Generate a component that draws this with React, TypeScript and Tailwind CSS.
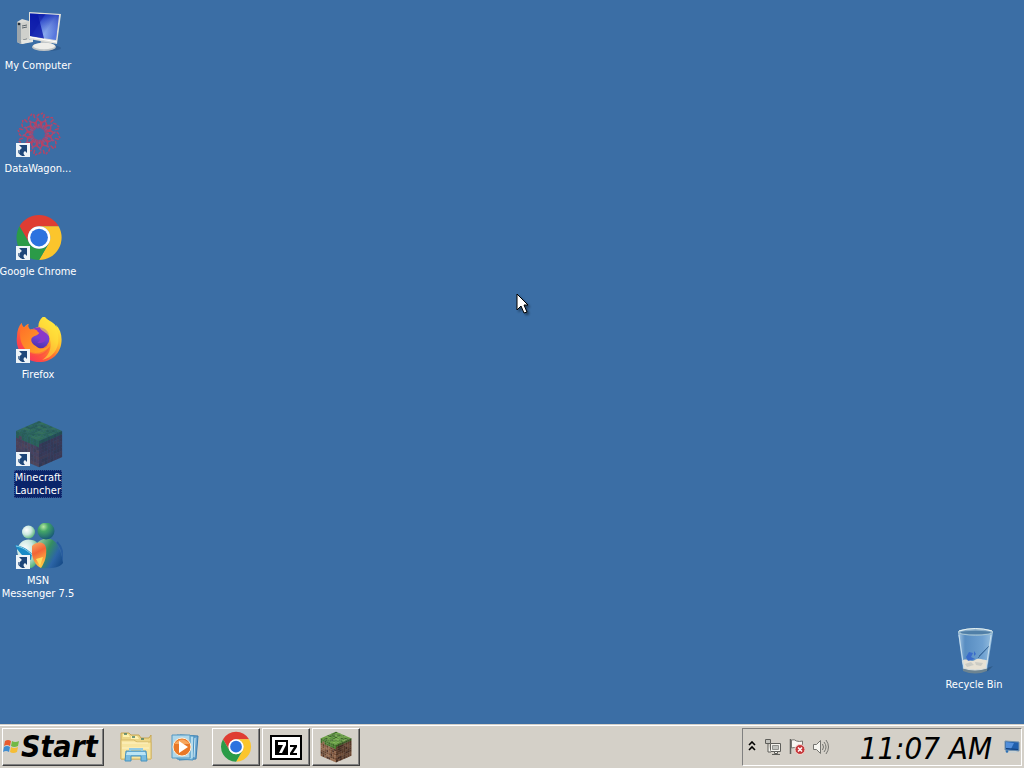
import React from "react";

type IconProps = { className?: string };

function noise(seed: number) {
  const v = Math.sin(seed * 127.1 + 11.7) * 43758.5453;
  return v - Math.floor(v);
}

function ComputerIcon() {
  return (
    <svg viewBox="0 0 48 48" className="size-12" aria-hidden="true">
      <defs>
        <linearGradient id="pc-screen" x1="0" y1="0" x2="1" y2="0.6">
          <stop offset="0" stopColor="#1c35c4" />
          <stop offset="0.38" stopColor="#0511a4" />
          <stop offset="0.42" stopColor="#3058dc" />
          <stop offset="0.7" stopColor="#7da6ee" />
          <stop offset="1" stopColor="#2347cf" />
        </linearGradient>
        <linearGradient id="pc-fade" x1="0" y1="0" x2="0" y2="1">
          <stop offset="0" stopColor="#0a1cac" stopOpacity="0.7" />
          <stop offset="1" stopColor="#c0daff" stopOpacity="0.35" />
        </linearGradient>
      </defs>
      <g transform="translate(1 1)">
        <ellipse cx="33" cy="39" rx="12" ry="3" fill="#264d7d" opacity="0.5" />
        <path d="M1 13 6 10l7 2v21l-8 2-4-2z" fill="#dcdcd8" />
        <path d="M1 13l4 1v21l-4-2z" fill="#9da6ac" />
        <path d="m5 14 8-2v21l-8 2z" fill="#cfd0cc" />
        <path d="m6 17 5-1M6 19l5-1M7 31l4-1" stroke="#5c666d" strokeWidth="1" />
        <circle cx="3" cy="15" r="1.3" fill="#26323d" />
        <path d="m5 31 12-1v3L6 35z" fill="#e7e7e2" />
        <path d="M25 31h10l1 7H24z" fill="#b9bfc2" />
        <ellipse cx="28" cy="38" rx="12" ry="4" fill="#bfc4c5" />
        <ellipse cx="28" cy="37" rx="11" ry="3.2" fill="#eeeeea" />
        <path d="m13 3 32 2-4 30-28-5z" fill="#e0e1dc" />
        <path d="m14 4.500 29 1.500-3 25-26-4z" fill="url(#pc-screen)" />
        <path d="m14 4.500 29 1.500-3 25-26-4z" fill="url(#pc-fade)" />
        <path d="m14 5 8 .5 6 24-14-2.500z" fill="#0815a8" opacity="0.8" />
        <path d="m14 28 27 5" stroke="#fff" />
      </g>
    </svg>
  );
}

function DataWagonIcon() {
  return (
    <svg viewBox="0 0 48 48" className="size-12" aria-hidden="true">
      <g stroke="#c83d5c" strokeLinecap="round" fill="none" opacity="0.88">
        {Array.from({ length: 12 }, (_, i) => (
          <g key={i} transform={`rotate(${i * 30 + 15} 24 23)`}>
            <path d="M24 16v-5l3-3M24 12l-3-2M24 6V3" strokeWidth="1.500" />
            <path d="M27 15l2-3M21 3l1-1M27 5l2-1" strokeWidth="1.500" />
            <path d="m18 8 2 2M22 16l-1-2" stroke="#a94c7a" strokeWidth="1.400" />
          </g>
        ))}
        <circle cx="24" cy="23" r="6.500" stroke="#a74474" strokeWidth="1.400" strokeDasharray="2 2" />
      </g>
    </svg>
  );
}

function ChromeIcon({ className = "size-12" }: IconProps) {
  return (
    <svg viewBox="0 0 48 48" className={className} aria-hidden="true">
      <g transform="translate(1.500 1) scale(.94)">
        <path d="M3.22 12A24 24 0 0 1 44.78 12H24A12 12 0 0 0 13.61 30Z" fill="#df3d32" />
        <path d="M44.78 12A24 24 0 0 1 24 48L34.39 30A12 12 0 0 0 24 12Z" fill="#fbc52c" />
        <path d="M24 48A24 24 0 0 1 3.22 12L13.61 30A12 12 0 0 0 34.39 30Z" fill="#2b9b48" />
        <circle cx="24" cy="24" r="12" fill="#fff" />
        <circle cx="24" cy="24" r="9.400" fill="#2b72df" />
      </g>
    </svg>
  );
}

function FirefoxIcon() {
  return (
    <svg viewBox="0 0 48 48" className="size-12" aria-hidden="true">
      <defs>
        <linearGradient id="fx-body" x1="0.85" y1="0.1" x2="0.15" y2="0.9">
          <stop offset="0" stopColor="#fff143" />
          <stop offset="0.3" stopColor="#ffc22f" />
          <stop offset="0.55" stopColor="#ff762f" />
          <stop offset="0.8" stopColor="#ff4a45" />
          <stop offset="1" stopColor="#f6355f" />
        </linearGradient>
        <linearGradient id="fx-globe" x1="0.7" y1="0" x2="0.4" y2="1">
          <stop offset="0" stopColor="#9a36cb" />
          <stop offset="0.5" stopColor="#7141d3" />
          <stop offset="1" stopColor="#4b2fa6" />
        </linearGradient>
        <linearGradient id="fx-head" x1="0" y1="0" x2="1" y2="1">
          <stop offset="0" stopColor="#ff6c29" />
          <stop offset="1" stopColor="#ffad27" />
        </linearGradient>
      </defs>
      <g transform="translate(1 -1) scale(.97 .98)">
        <path d="M29 0c-4 3-6 6-6 11l-8 3c-3-2-3-4-2-6-3 1-4 3-5 4-2-1-2-3-2-5-3 3-5 8-5 14-2 14 8 26 23 26 13 0 23-9 23-23 0-6-2-11-6-15l1 3C40 6 32 5 29 0z" fill="url(#fx-body)" />
        <circle cx="24" cy="23" r="10.500" fill="url(#fx-globe)" />
        <path d="M16 14c5-4 15-4 18 5l-4-2c3 8-2 12-8 10 6-3 3-9-3-9z" fill="#8a38c8" />
        <path d="M29 0c4 5 12 9 14 17 3 14-3 25-16 28 8-5 11-15 7-24-2-5-10-5-10-12 0-4 2-7 5-9z" fill="#ffe43b" opacity="0.62" />
        <path d="M6 7c0 2 1 4 3 5 1-2 3-3 4-4-1 3 0 5 2 6 3-1 6 0 7 1 0 1 1 2 2 2-1 3-7 3-8 6-1 3 1 6 5 8 5 4 11 2 14-2-3 10-15 13-23 7C3 29 3 18 6 7z" fill="url(#fx-head)" />
        <path d="M8 33c8 7 19 6 27-2-3 9-14 13-23 8z" fill="#fc5044" opacity="0.5" />
      </g>
    </svg>
  );
}

const topShades = ["#5b9938", "#487e2d", "#70aa45", "#3c6b26", "#669f3e"];
const dirtShades = ["#795039", "#94684b", "#513427", "#66442f", "#875b40"];
const topDim = ["#2f6b59", "#2b625a", "#35705b", "#295c57", "#30685f"];
const dirtDim = ["#48415d", "#4e4459", "#3d3f57", "#424059", "#4a4058"];

function GrassBlock({ className = "size-12", dim = false }: IconProps & { dim?: boolean }) {
  const tops = dim ? topDim : topShades;
  const dirt = dim ? dirtDim : dirtShades;
  const cells = Array.from({ length: 64 }, (_, i) => i);
  return (
    <svg viewBox="0 0 48 48" className={className} aria-hidden="true">
      <g transform="matrix(2.875 1.250 -2.875 1.250 24 1)">
        {cells.map((i) => (
          <rect key={i} x={i % 8} y={Math.floor(i / 8)} width="1.050" height="1.050" fill={tops[Math.floor(noise(i + 1) * 5)]} />
        ))}
      </g>
      <g transform="matrix(2.875 1.250 0 3.250 1 11)">
        {cells.map((i) => (
          <rect key={i} x={i % 8} y={Math.floor(i / 8)} width="1.050" height="1.050" fill={i < 8 || (i < 16 && noise(i) > 0.5) ? tops[i % 2 ? 1 : 3] : dirt[Math.floor(noise(i + 101) * 5)]} />
        ))}
      </g>
      <g transform="matrix(2.875 -1.250 0 3.250 24 21)">
        {cells.map((i) => (
          <rect key={i} x={i % 8} y={Math.floor(i / 8)} width="1.050" height="1.050" fill={i < 8 || (i < 16 && noise(i + 31) > 0.5) ? tops[i % 2 ? 3 : 1] : dirt[Math.floor(noise(i + 241) * 5)]} />
        ))}
      </g>
      <path d="m24 21 23-10v26L24 47z" fill={dim ? "#17294b" : "#1d120c"} opacity="0.3" />
    </svg>
  );
}

function MessengerIcon() {
  return (
    <svg viewBox="0 0 48 48" className="size-12" aria-hidden="true">
      <defs>
        <radialGradient id="ms-head" cx="0.35" cy="0.25" r="0.8">
          <stop offset="0" stopColor="#b9e9a1" />
          <stop offset="0.35" stopColor="#44a668" />
          <stop offset="1" stopColor="#155478" />
        </radialGradient>
        <radialGradient id="ms-light" cx="0.35" cy="0.35" r="0.8">
          <stop offset="0" stopColor="#fff" />
          <stop offset="0.45" stopColor="#cce8e0" />
          <stop offset="1" stopColor="#39a45d" />
        </radialGradient>
        <linearGradient id="ms-body" x1="0" y1="0.2" x2="1" y2="0.8">
          <stop offset="0" stopColor="#9ccda2" />
          <stop offset="0.4" stopColor="#358e60" />
          <stop offset="0.7" stopColor="#2c65a6" />
          <stop offset="1" stopColor="#164b88" />
        </linearGradient>
        <linearGradient id="ms-heart" x1="0" y1="0" x2="0.3" y2="1">
          <stop offset="0" stopColor="#fcae64" />
          <stop offset="0.45" stopColor="#f36437" />
          <stop offset="1" stopColor="#ffc444" />
        </linearGradient>
      </defs>
      <g transform="translate(0 -1)">
        <path d="M21 24c2-7 12-10 18-5 5 3 8 14 9 22-3 5-15 6-22 5z" fill="url(#ms-body)" />
        <path d="M42 20c4 4 6 11 6 18" stroke="#285d9f" strokeWidth="2" fill="none" />
        <circle cx="31" cy="9" r="8.500" fill="url(#ms-head)" />
        <path d="M2 28c2-8 8-12 15-10 6 1 8 6 7 14-1 8-4 13-8 14C8 45 3 38 2 28z" fill="url(#ms-light)" />
        <circle cx="13.500" cy="10" r="6.500" fill="url(#ms-light)" />
        <path d="M0 23c7 1 13 4 17 9l-1 6C9 36 3 30 0 23z" fill="#188bc6" />
        <path d="M1 24c6 1 11 4 16 9" stroke="#8cd2eb" fill="none" />
        <path d="M17 24c4-5 13-5 14 2 1 7-1 14-5 20-5-2-9-9-9-15z" fill="url(#ms-heart)" />
        <path d="m21 37 7-2-3 9z" fill="#ffdc5b" />
      </g>
    </svg>
  );
}

function RecycleIcon() {
  return (
    <svg viewBox="0 0 48 48" className="size-12" aria-hidden="true">
      <defs>
        <linearGradient id="bin-glass">
          <stop offset="0" stopColor="#c9e3f6" stopOpacity="0.8" />
          <stop offset="0.2" stopColor="#689ed1" stopOpacity="0.65" />
          <stop offset="0.7" stopColor="#7fb1df" stopOpacity="0.75" />
          <stop offset="1" stopColor="#9dc3df" />
        </linearGradient>
      </defs>
      <path d="m36 41 6-2-5 5-13 2z" fill="#24496e" opacity="0.5" />
      <path d="m7 5 5 38q12 5 24 0l6-38z" fill="url(#bin-glass)" />
      <path d="M11 34c5-4 8 2 13-1 5-3 9 1 13 0l-2 9q-11 4-22 0z" fill="#e6e1d4" />
      <path d="m14 37 6-2 3 3-7 2zm10-2 8 1-2 3-5-1z" fill="#cacbc4" />
      <path d="m15 30 3-5 4 1-2 4 4 2-7 2zM23 24l2 3-2 2" fill="#3161cc" opacity="0.8" />
      <path d="m37 20-9 9M39 18 27 31" stroke="#3d6d9f" />
      <path d="m8 8 5 34M40 8l-5 34" stroke="#c9dfed" fill="none" />
      <path d="M12 41q12 4 24 0v3q-12 5-24 0z" fill="#6d8491" />
      <path d="M12 41q12 4 24 0" stroke="#d8dfdf" fill="none" />
      <ellipse cx="24.500" cy="5" rx="17.500" ry="3.200" fill="#87acc9" stroke="#a9c7d5" />
      <path d="M8 4q16-5 33 0" stroke="#e7f2f3" fill="none" />
      <ellipse cx="24.500" cy="5.500" rx="15" ry="1.700" fill="#507fa7" />
    </svg>
  );
}

function ShortcutBadge() {
  return (
    <svg viewBox="0 0 14 14" className="absolute bottom-0.5 left-px size-3.5" aria-hidden="true">
      <path d="M0 0h14v14H0z" fill="#eef4f8" />
      <path d="M3 2h8v8L9 8c-2 1-2 3 0 5H6C2 10 3 7 6 5z" fill="#1d4679" />
      <path d="M3 7c-1 2 0 4 2 5" stroke="#1d4679" fill="none" />
    </svg>
  );
}

type DesktopItemProps = {
  label: string;
  icon: React.ReactNode;
  shortcut?: boolean;
  selected?: boolean;
};

function DesktopItem({ label, icon, shortcut, selected }: DesktopItemProps) {
  return (
    <button type="button" className="flex w-19 flex-col items-center gap-0.5 text-[11px] leading-[13px] text-white">
      <span className="relative ml-0.5 block size-12">
        {icon}
        {shortcut && <ShortcutBadge />}
      </span>
      <span
        className={
          selected
            ? "whitespace-pre border border-dotted border-[#33508c] bg-[#0a246a] text-center"
            : "whitespace-pre border border-transparent text-center"
        }
      >
        {label}
      </span>
    </button>
  );
}

function WindowsFlag() {
  return (
    <svg viewBox="0 0 16 16" className="size-4 shrink-0" aria-hidden="true">
      <path d="M2 2q3-2 6 0L7 7Q4 5 1 7z" fill="#e95b2e" />
      <path d="M9 2q3 2 7 0l-1 5q-4 2-7 0z" fill="#72b945" />
      <path d="M1 8q3-2 6 0l-1 5q-3-2-6 0z" fill="#408dd0" />
      <path d="M8 8q3 2 7 0l-1 5q-4 2-7 0z" fill="#f5bd35" />
    </svg>
  );
}

function ExplorerIcon() {
  return (
    <svg viewBox="0 0 32 32" className="size-8" aria-hidden="true">
      <path d="M1 3V2h8l2 2h8l2 3h8l2-3v24H1z" fill="#ecd687" stroke="#c7a755" />
      <path d="M3 3h5l2 3H3z" fill="#fff2af" />
      <path d="M11 5h6l2 3h-8z" fill="#fff3b5" />
      <path d="M1 9h13l3 2h14v17H1z" fill="#f7e5a0" stroke="#d5b867" />
      <path d="M4 3h3m5 3h3m6 2h3" stroke="#477e69" strokeWidth="1.500" />
      <path d="M2 12h26M2 17h27" stroke="#fff3c4" />
      <path d="m5 30 1-10h20l1 10h-6v-5H11v5z" fill="#78bce0" stroke="#4692bd" />
      <path d="m7 21-1 3h20l-1-3z" fill="#bbe5f5" />
      <path d="M10 20v-2h12v2" fill="none" stroke="#92cbe4" strokeWidth="2" />
    </svg>
  );
}

function MediaIcon() {
  return (
    <svg viewBox="0 0 32 32" className="size-8" aria-hidden="true">
      <path d="m11 4 18 1-2 23-17 1z" fill="#6da8d2" stroke="#397caf" />
      <path d="m8 4 17 1-1 24-16-1z" fill="#96cbe7" stroke="#4a91bf" />
      <path d="M3 4h18v23H3z" fill="#afd7ea" stroke="#5397c2" />
      <path d="M23 6v21m3-20-1 19" stroke="#d4ecf4" />
      <circle cx="13" cy="16" r="9" fill="#e97827" stroke="#fff0d9" />
      <path d="M5 13q8-9 16 0z" fill="#f7a65c" />
      <path d="m10 10 9 6-9 6z" fill="#fff" />
    </svg>
  );
}

function SevenZipIcon() {
  return (
    <svg viewBox="0 0 32 32" className="size-8" aria-hidden="true">
      <path d="M0 4h32v25H0z" fill="#000" />
      <path d="M2 6h28v21H2z" fill="#fff" />
      <path d="M5 9h13v15H5z" fill="#000" />
      <path d="M8 11h8v3l-4 8H9l4-8H8z" fill="#fff" />
      <path d="M20 14h7v2l-4 6h4v2h-7v-2l4-6h-4z" fill="#000" />
    </svg>
  );
}

function NetworkIcon() {
  return (
    <svg viewBox="0 0 16 16" className="size-4" aria-hidden="true" fill="#f5f4ef" stroke="#5e5e5a">
      <path d="M5.500 4.500h10v8h-10z" />
      <path d="M7.500 6.500h6v4h-6z" fill="#c1c2be" stroke="#91928e" />
      <path d="M9.500 12.500h3v2h-3zM7 15.500h8" />
      <path d="M.5.500h5v4h-5zM3 5v8h3" />
      <path d="M2 1v3m2-3v3" stroke="#8e8e89" />
    </svg>
  );
}

function FlagIcon() {
  return (
    <svg viewBox="0 0 16 16" className="size-4" aria-hidden="true">
      <path d="M1.500 0v15" stroke="#60605c" strokeWidth="1.500" />
      <path d="M2.500 1q3-1 5 1 3 1 6 0v7q-3 2-6 0-2-1-5 0z" fill="#f8f7f2" stroke="#777671" />
      <circle cx="11" cy="10.500" r="5" fill="#c5373a" stroke="#f3d8d2" />
      <path d="m9 8.500 4 4m0-4-4 4" stroke="#fff" strokeWidth="1.500" />
    </svg>
  );
}

function SpeakerIcon() {
  return (
    <svg viewBox="0 0 16 16" className="size-4" aria-hidden="true" fill="none" stroke="#73736f">
      <path d="M.5 5.500h3l4-4v13l-4-4h-3z" fill="#f6f5f0" />
      <path d="M9.500 5q2 3 0 6M11 3q4 5 0 10M13 1q5 7 0 14" />
    </svg>
  );
}

function TrayMonitor() {
  return (
    <svg viewBox="0 0 16 16" className="size-4" aria-hidden="true">
      <path d="m1 2 14 1v9L1 11z" fill="#205fad" stroke="#7593ad" />
      <path d="m2 3 8 1-3 6-5-1z" fill="#528fdb" />
      <path d="m2 9 12 1v1L2 10z" fill="#123f7b" />
      <path d="M5 12h7l2 2H4z" fill="#c9d0d1" />
      <circle cx="3" cy="12.500" r="1.300" fill="#2c70b5" />
    </svg>
  );
}

const raised =
  "border border-t-white border-l-white border-r-[#404040] border-b-[#404040] shadow-[inset_-1px_-1px_0_#808080]";

function TaskButton({ label, children }: { label: string; children: React.ReactNode }) {
  return (
    <button type="button" aria-label={label} className={`flex h-[38px] w-12 items-center justify-center ${raised}`}>
      {children}
    </button>
  );
}

export default function App() {
  return (
    <div className="relative flex min-h-screen flex-col overflow-hidden bg-[#3b6ea5] font-['DejaVu_Sans_Condensed','DejaVu_Sans',sans-serif]">
      <main className="flex flex-1 justify-between">
        <div className="grid auto-rows-[103px] content-start items-start pt-2">
          <DesktopItem label="My Computer" icon={<ComputerIcon />} />
          <DesktopItem label="DataWagon..." icon={<DataWagonIcon />} shortcut />
          <DesktopItem label="Google Chrome" icon={<ChromeIcon />} shortcut />
          <DesktopItem label="Firefox" icon={<FirefoxIcon />} shortcut />
          <DesktopItem label={"Minecraft\nLauncher"} icon={<GrassBlock dim />} shortcut selected />
          <DesktopItem label={"MSN\nMessenger 7.5"} icon={<MessengerIcon />} shortcut />
        </div>
        <div className="flex flex-col justify-end pr-3 pb-8">
          <DesktopItem label="Recycle Bin" icon={<RecycleIcon />} />
        </div>
      </main>

      <footer className="flex h-11 items-center justify-between border-t border-[#d4d0c8] bg-[#d4d0c8] px-0.5 shadow-[inset_0_1px_0_#ffffff]">
        <div className="flex items-center">
          <button type="button" className={`flex h-[38px] w-[102px] items-center gap-0.5 overflow-hidden text-[30px] font-bold italic leading-9 text-black ${raised}`}>
            <WindowsFlag />
            <span>Start</span>
          </button>
          <nav aria-label="Quick launch" className="flex items-center gap-[17px] pl-4">
            <button type="button" aria-label="Windows Explorer"><ExplorerIcon /></button>
            <button type="button" aria-label="Media Player"><MediaIcon /></button>
          </nav>
          <div className="flex items-center gap-0.5 pl-[11px]">
            <TaskButton label="Google Chrome"><ChromeIcon className="size-8" /></TaskButton>
            <TaskButton label="7-Zip"><SevenZipIcon /></TaskButton>
            <TaskButton label="Minecraft Launcher"><GrassBlock className="size-8" /></TaskButton>
          </div>
        </div>

        <section aria-label="Notification area" className="flex h-[38px] items-center border border-t-[#808080] border-l-[#808080] border-r-white border-b-white pl-1">
          <button type="button" aria-label="Show hidden icons" className="mr-2">
            <svg viewBox="0 0 10 12" className="h-3 w-2.5" fill="none" stroke="#000" strokeWidth="1.600" aria-hidden="true">
              <path d="m2 4 3-3 3 3M2 9l3-3 3 3" />
            </svg>
          </button>
          <div className="flex items-center gap-2">
            <button type="button" aria-label="Network"><NetworkIcon /></button>
            <button type="button" aria-label="Action Center"><FlagIcon /></button>
            <button type="button" aria-label="Volume"><SpeakerIcon /></button>
          </div>
          <time className="w-[175px] pr-3 pt-0.5 text-right text-[31px] italic leading-9 text-black">11:07 AM</time>
          <button type="button" aria-label="Show desktop" className="mr-px"><TrayMonitor /></button>
        </section>
      </footer>

      <svg viewBox="0 0 16 24" className="pointer-events-none absolute left-[516px] top-[293px] h-6 w-4 drop-shadow-[2px_2px_1px_rgba(0,0,0,0.4)]" aria-hidden="true">
        <path d="M1 1v16l4-4 3 7 3-1-3-7h4z" fill="#fff" stroke="#000" />
      </svg>
    </div>
  );
}
